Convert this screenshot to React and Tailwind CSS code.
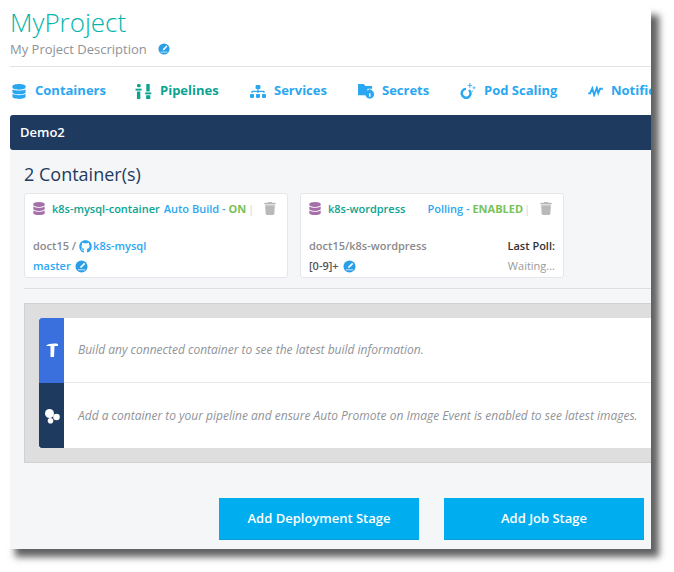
import { FaDatabase, FaSitemap, FaGithub, FaTrash } from 'react-icons/fa'

function EditBadge({ className }) {
  return (
    <svg viewBox="0 0 14 14" className={className}>
      <circle cx="7" cy="7" r="6.5" fill="#2a9fe8" />
      <path d="M9.8 3 L11 4.2 L7 8.4 L5.6 8.6 L5.8 7.1 Z" fill="#fff" />
      <path d="M3 10.2 H11 V11 H3 Z" fill="#fff" />
    </svg>
  )
}

function PipelinesIcon() {
  return (
    <svg viewBox="0 0 18 16" className="w-[17px] h-[15px]" fill="#0ba391">
      <rect x="2" y="0" width="4" height="3.5" rx="1.5" />
      <rect x="0.5" y="5" width="6.5" height="2" />
      <rect x="2" y="8" width="3.6" height="8" />
      <rect x="12" y="0" width="3.6" height="8" />
      <rect x="10.8" y="9" width="6.5" height="2" />
      <rect x="11.8" y="12" width="4.4" height="4" />
    </svg>
  )
}

function SecretsIcon() {
  return (
    <svg viewBox="0 0 17 16" className="w-[16px] h-[15px]" fill="#2aa7f2">
      <path d="M0 0 H6 L8 2 H15 V5 H10 V12 H0 Z" />
      <circle cx="12.5" cy="11" r="4.6" />
      <rect x="11.7" y="10" width="1.6" height="3.6" fill="#fff" />
      <path d="M10.6 7.6 a2 2 0 0 1 3.8 0" fill="none" stroke="#2aa7f2" strokeWidth="1.2" />
    </svg>
  )
}

function ScalingIcon() {
  return (
    <svg viewBox="0 0 17 18" className="w-[16px] h-[17px]" fill="#2aa7f2">
      <path d="M6.5 5 a6 6 0 1 0 4 1.5 l-1.8 1.8 a3.4 3.4 0 1 1 -2.4 -0.8 Z" />
      <path d="M10 0 h1 v2 h2 v1 h-2 v2 h-1 v-2 h-2 v-1 h2 Z" />
      <path d="M14.5 3.5 h.8 v1.2 h1.2 v.8 h-1.2 v1.2 h-.8 v-1.2 h-1.2 v-.8 h1.2 Z" />
      <rect x="12.5" y="8" width="1.2" height="1.2" />
    </svg>
  )
}

function PulseIcon() {
  return (
    <svg viewBox="0 0 16 12" className="w-[15px] h-[11px]" fill="none" stroke="#2aa7f2" strokeWidth="2">
      <path d="M0 8 H2 L4.5 2.5 L6.5 10 L9.5 2 L11 8 L13 3 H16" />
    </svg>
  )
}

function NavItem({ icon, label, active, className }) {
  return (
    <div className={`flex items-center gap-2 shrink-0 whitespace-nowrap ${className}`}>
      {icon}
      <span className={`text-[13px] font-bold ${active ? 'text-[#0ba391]' : 'text-[#2aa7f2]'}`}>{label}</span>
    </div>
  )
}

function Card({ name, status, state, statusGap, bottom }) {
  return (
    <div className="w-[264px] h-[85px] shrink-0 bg-white border border-[#e4e6e9] rounded-[3px] pl-[8px] pr-[8px] pt-[7px] text-[11px] leading-[15px]">
      <div className="flex items-center h-[15px]">
        <FaDatabase className="w-[12px] h-[13px] text-[#a56fa9] mr-[7px]" />
        <span className="font-semibold text-[#0ba391]">{name}</span>
        <span className={`text-[#2aa7f2] font-semibold ${statusGap}`}>{status} - <span className="text-[#78c257] font-bold">{state}</span></span>
        <span className="ml-auto text-[#c9d6e2] mr-[10px]">|</span>
        <FaTrash className="w-[12px] h-[13px] text-[#b9b9b9] mr-[3px]" />
      </div>
      {bottom}
    </div>
  )
}

export default function App() {
  return (
    <div className="w-[674px] h-[572px] bg-white overflow-hidden pl-[7px] pt-[7px] font-['Open_Sans',sans-serif]">
      <div className="w-[644px] h-[542px] pl-[3px] bg-white overflow-hidden shadow-[8px_8px_7px_rgba(0,0,0,0.62)]">
        <div className="h-[60px] pt-[1px] border-b border-[#e3e3e3]">
          <h1 className="text-[26px] font-light leading-[28px] text-[#04b5ac]">MyProject</h1>
          <div className="flex items-center mt-[4px] text-[13px] leading-[18px] text-[#8f9297]">
            My Project Description
            <EditBadge className="w-[12px] h-[12px] ml-[11px]" />
          </div>
        </div>

        <div className="h-[48px] flex items-center overflow-hidden pl-[1px]">
          <NavItem icon={<FaDatabase className="w-[16px] h-[15px] text-[#2aa7f2]" />} label="Containers" className="w-[124px]" />
          <NavItem icon={<PipelinesIcon />} label="Pipelines" active className="w-[115px]" />
          <NavItem icon={<FaSitemap className="w-[16px] h-[15px] text-[#2aa7f2]" />} label="Services" className="w-[108px]" />
          <NavItem icon={<SecretsIcon />} label="Secrets" className="w-[102px]" />
          <NavItem icon={<ScalingIcon />} label="Pod Scaling" className="w-[128px]" />
          <NavItem icon={<PulseIcon />} label="Notifications" />
        </div>

        <div className="h-[35px] flex items-center pl-[10px] bg-[#1f3a5f] rounded-tl-[3px] rounded-bl-[3px] text-white text-[13px] font-semibold">
          Demo2
        </div>

        <div className="h-[399px] bg-[#f4f6f8] pl-[14px] overflow-hidden">
          <h2 className="pt-[13px] text-[18px] leading-[22px] text-[#1f3a5f]">2 Container(s)</h2>

          <div className="flex gap-[12px] mt-[8px]">
            <Card
              name="k8s-mysql-container"
              status="Auto Build"
              state="ON"
              statusGap="ml-[4px]"
              bottom={
                <div className="mt-[20px] leading-[20px]">
                  <div className="flex items-center text-[#8a8a8a] font-semibold">
                    doct15 /
                    <FaGithub className="w-[13px] h-[13px] ml-[3px] mr-[1px] text-[#2aa7f2]" />
                    <span className="text-[#2aa7f2]">k8s-mysql</span>
                  </div>
                  <div className="flex items-center text-[#2aa7f2] font-semibold">
                    master
                    <EditBadge className="w-[13px] h-[13px] ml-[4px]" />
                  </div>
                </div>
              }
            />
            <Card
              name="k8s-wordpress"
              status="Polling"
              state="ENABLED"
              statusGap="ml-[22px]"
              bottom={
                <div className="mt-[20px] leading-[20px] flex justify-between pr-[-1px]">
                  <div>
                    <div className="text-[#8a8a8a] font-semibold">doct15/k8s-wordpress</div>
                    <div className="flex items-center text-[#555] font-semibold">
                      [0-9]+
                      <EditBadge className="w-[13px] h-[13px] ml-[4px]" />
                    </div>
                  </div>
                  <div className="text-right">
                    <div className="text-[#333] font-semibold">Last Poll:</div>
                    <div className="text-[#9a9a9a]">Waiting...</div>
                  </div>
                </div>
              }
            />
          </div>

          <div className="h-px bg-[#dfdfdf] mt-[10px]" />

          <div className="mt-[14px] h-[160px] bg-[#dedede] border border-[#cfd2d5] border-r-0 pl-[14px] pt-[14px] overflow-hidden">
            <div className="h-[130px] bg-white flex flex-col">
              <div className="h-[65px] flex items-center border-b border-[#e4e6e9]">
                <div className="w-[25px] h-[65px] shrink-0 bg-[#3a70dd] rounded-tl-[3px] flex items-center justify-center">
                  <svg viewBox="0 0 12 14" className="w-[12px] h-[14px]" fill="#fff">
                    <path d="M0 3 C2 0.5 9 0 12 1 V3 H8.5 L8 14 H4.5 L4.5 3 C3 2.8 1.5 3 0 3 Z" />
                  </svg>
                </div>
                <p className="pl-[14px] text-[12px] italic text-[#909399] whitespace-nowrap">Build any connected container to see the latest build information.</p>
              </div>
              <div className="h-[65px] flex items-center">
                <div className="w-[25px] h-[65px] shrink-0 bg-[#1f3a5f] rounded-bl-[3px] flex items-center justify-center">
                  <svg viewBox="0 0 16 16" className="w-[16px] h-[16px]" fill="#fff">
                    <circle cx="5.5" cy="5.5" r="4.5" />
                    <circle cx="12.5" cy="9" r="3.3" />
                    <circle cx="6.5" cy="12.8" r="2.8" />
                  </svg>
                </div>
                <p className="pl-[14px] text-[12px] italic text-[#909399] whitespace-nowrap">Add a container to your pipeline and ensure Auto Promote on Image Event is enabled to see latest images.</p>
              </div>
            </div>
          </div>

          <div className="flex gap-[25px] mt-[35px] pl-[195px]">
            <button className="w-[200px] h-[42px] shrink-0 bg-[#00aeef] border-b border-[#0a9fd8] text-white text-[13px] font-semibold">Add Deployment Stage</button>
            <button className="w-[200px] h-[42px] shrink-0 bg-[#00aeef] border-b border-[#0a9fd8] text-white text-[13px] font-semibold">Add Job Stage</button>
          </div>
        </div>
      </div>
    </div>
  )
}
